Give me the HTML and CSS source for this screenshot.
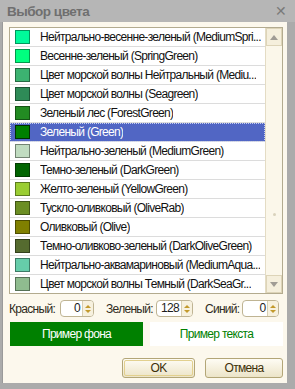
FILE: index.html
```html
<!DOCTYPE html>
<html lang="ru">
<head>
    <meta charset="UTF-8">
    <title>Выбор цвета</title>
    <link rel="stylesheet" href="styles.css">
</head>
<body>
    <div class="window">
        <div class="titlebar">
            <span class="title">Выбор цвета</span>
            <span class="close">✕</span>
        </div>
        <div class="dialog">
            <div class="list">
                <div class="rows">
                    <div class="row"><span class="swatch" style="background:#00fa9a"></span><span class="name">Нейтрально-весенне-зеленый (MediumSpri...</span></div>
                    <div class="row"><span class="swatch" style="background:#00ff7f"></span><span class="name">Весенне-зеленый (SpringGreen)</span></div>
                    <div class="row"><span class="swatch" style="background:#3cb371"></span><span class="name">Цвет морской волны Нейтральный (Mediu...</span></div>
                    <div class="row"><span class="swatch" style="background:#2e8b57"></span><span class="name">Цвет морской волны (Seagreen)</span></div>
                    <div class="row"><span class="swatch" style="background:#228b22"></span><span class="name">Зеленый лес (ForestGreen)</span></div>
                    <div class="row selected"><span class="swatch" style="background:#008000"></span><span class="name">Зеленый (Green)</span></div>
                    <div class="row"><span class="swatch" style="background:#c0dcc0"></span><span class="name">Нейтрально-зеленый (MediumGreen)</span></div>
                    <div class="row"><span class="swatch" style="background:#006400"></span><span class="name">Темно-зеленый (DarkGreen)</span></div>
                    <div class="row"><span class="swatch" style="background:#9acd32"></span><span class="name">Желто-зеленый (YellowGreen)</span></div>
                    <div class="row"><span class="swatch" style="background:#6b8e23"></span><span class="name">Тускло-оливковый (OliveRab)</span></div>
                    <div class="row"><span class="swatch" style="background:#808000"></span><span class="name">Оливковый (Olive)</span></div>
                    <div class="row"><span class="swatch" style="background:#556b2f"></span><span class="name">Темно-оливково-зеленый (DarkOliveGreen)</span></div>
                    <div class="row"><span class="swatch" style="background:#66cdaa"></span><span class="name">Нейтрально-аквамариновый (MediumAqua...</span></div>
                    <div class="row"><span class="swatch" style="background:#8fbc8f"></span><span class="name">Цвет морской волны Темный (DarkSeaGr...</span></div>
                </div>
                <div class="scrollbar">
                    <div class="sb-btn"><span class="arrow up"></span></div>
                    <div class="sb-track"><span class="knob"></span></div>
                    <div class="sb-btn"><span class="arrow down"></span></div>
                </div>
            </div>

            <div class="rgb">
                <span class="label">Красный:</span>
                <div class="spin red"><span class="value">0</span><span class="spin-btn"><i class="tri up"></i><i class="tri down"></i></span></div>
                <span class="label gap">Зеленый:</span>
                <div class="spin"><span class="value">128</span><span class="spin-btn"><i class="tri up"></i><i class="tri down"></i></span></div>
                <span class="label gap">Синий:</span>
                <div class="spin"><span class="value">0</span><span class="spin-btn"><i class="tri up"></i><i class="tri down"></i></span></div>
            </div>

            <div class="preview">
                <div class="sample back">Пример фона</div>
                <div class="sample text">Пример текста</div>
            </div>

            <div class="actions">
                <div class="button default"><span>OK</span></div>
                <div class="button cancel"><span>Отмена</span></div>
            </div>
        </div>
    </div>
</body>
</html>
```

FILE: styles.css
```css
/* Window frame */
body {
    margin: 0;
    font-family: "Liberation Sans", Arial, sans-serif;
    font-size: 12px;
    letter-spacing: -0.7px;
    background-color: #ababab;
}
.window {
    width: 295px;
    height: 389px;
    background-color: #ababab;
    display: flex;
    flex-direction: column;
}
.titlebar {
    height: 22px;
    display: flex;
    align-items: center;
    justify-content: space-between;
    padding: 0 9px 0 7px;
    background-color: #b6b6b6;
}
.title {
    font-size: 13.5px;
    font-weight: bold;
    letter-spacing: -0.5px;
    color: #6f6f6f;
}
.close {
    font-family: "DejaVu Sans", sans-serif;
    font-size: 14px;
    font-weight: bold;
    color: #7a7a7a;
}
.dialog {
    flex: 1;
    margin: 0 8px 6px 2px;
    padding: 5px 4px 0 6px;
    background-color: #fcf8ed;
    border-left: 1px solid #9a9a9a;
    box-sizing: border-box;
}

/* Color list */
.list {
    height: 267px;
    border: 1px solid #b3ab8f;
    background-color: #ffffff;
    display: flex;
    overflow: hidden;
    box-sizing: border-box;
}
.rows {
    flex: 1;
    min-width: 0;
    overflow: hidden;
}
.row {
    height: 19px;
    box-sizing: border-box;
    border-bottom: 1px solid #dcdcdc;
    display: flex;
    align-items: center;
    color: #111111;
    white-space: nowrap;
}
.row.selected {
    background-color: #5166c4;
    color: #ffffff;
    outline: 1px dotted #c8d0f0;
    outline-offset: -1px;
}
.name {
    overflow: hidden;
    text-overflow: ellipsis;
}
.swatch {
    width: 15px;
    height: 14px;
    margin: 0 10px 0 5px;
    box-sizing: border-box;
    border: 1px solid rgba(0, 0, 0, 0.4);
    flex: none;
}
.row.selected .swatch {
    border-color: #003000;
}

/* Scrollbar */
.scrollbar {
    width: 16px;
    flex: none;
    background-color: #fbf7ea;
    border-left: 1px solid #e4dcc4;
    display: flex;
    flex-direction: column;
}
.sb-btn {
    height: 16px;
    background-color: #f5efdc;
    border: 1px solid #ddd4b8;
    display: flex;
    align-items: center;
    justify-content: center;
}
.sb-track {
    flex: 1;
    display: flex;
    align-items: center;
    justify-content: center;
    padding-top: 108px;
}
.knob {
    width: 3px;
    height: 3px;
    border-radius: 50%;
    background-color: #d9d2bc;
}
.arrow {
    width: 0;
    height: 0;
    border-left: 4px solid transparent;
    border-right: 4px solid transparent;
}
.arrow.up {
    border-bottom: 5px solid #a09c94;
}
.arrow.down {
    border-top: 5px solid #a09c94;
}

/* RGB inputs */
.rgb {
    display: flex;
    align-items: center;
    margin-top: 6px;
    height: 17px;
    color: #2e2a20;
}
.label {
    margin-right: 5px;
}
.label.gap {
    margin-left: 12px;
    margin-right: 3px;
}
.spin {
    width: 37px;
    height: 17px;
    box-sizing: border-box;
    border: 1px solid #bfb493;
    border-radius: 4px;
    background-color: #ffffff;
    display: flex;
    overflow: hidden;
}
.spin.red {
    width: 34px;
}
.value {
    flex: 1;
    text-align: right;
    padding-right: 2px;
    line-height: 15px;
    color: #1c1c1c;
}
.spin-btn {
    width: 10px;
    border-left: 1px solid #d8cfb2;
    background-color: #f7f1de;
    display: flex;
    flex-direction: column;
    align-items: center;
    justify-content: center;
    gap: 2px;
}
.tri {
    width: 0;
    height: 0;
    border-left: 3px solid transparent;
    border-right: 3px solid transparent;
}
.tri.up {
    border-bottom: 3px solid #c39a2c;
}
.tri.down {
    border-top: 3px solid #c39a2c;
}

/* Preview */
.preview {
    display: flex;
    gap: 7px;
    margin: 5px 0 0 1px;
}
.sample {
    width: 133px;
    height: 24px;
    display: flex;
    align-items: center;
    justify-content: center;
}
.sample.back {
    background-color: #008000;
    color: #ffffff;
}
.sample.text {
    background-color: #ffffff;
    color: #008000;
}

/* Buttons */
.actions {
    display: flex;
    justify-content: flex-end;
    gap: 10px;
    margin-top: 12px;
}
.button {
    height: 20px;
    box-sizing: border-box;
    border: 1px solid #b3a677;
    border-radius: 3px;
    background: linear-gradient(#fefcf4, #ece4c8);
    display: flex;
    align-items: center;
    justify-content: center;
    color: #3d3008;
}
.button.default {
    width: 73px;
    padding: 1px;
}
.button.default span {
    flex: 1;
    align-self: stretch;
    display: flex;
    align-items: center;
    justify-content: center;
    border: 1px solid #e2d08e;
    border-radius: 2px;
}
.button.cancel {
    width: 78px;
}
```
